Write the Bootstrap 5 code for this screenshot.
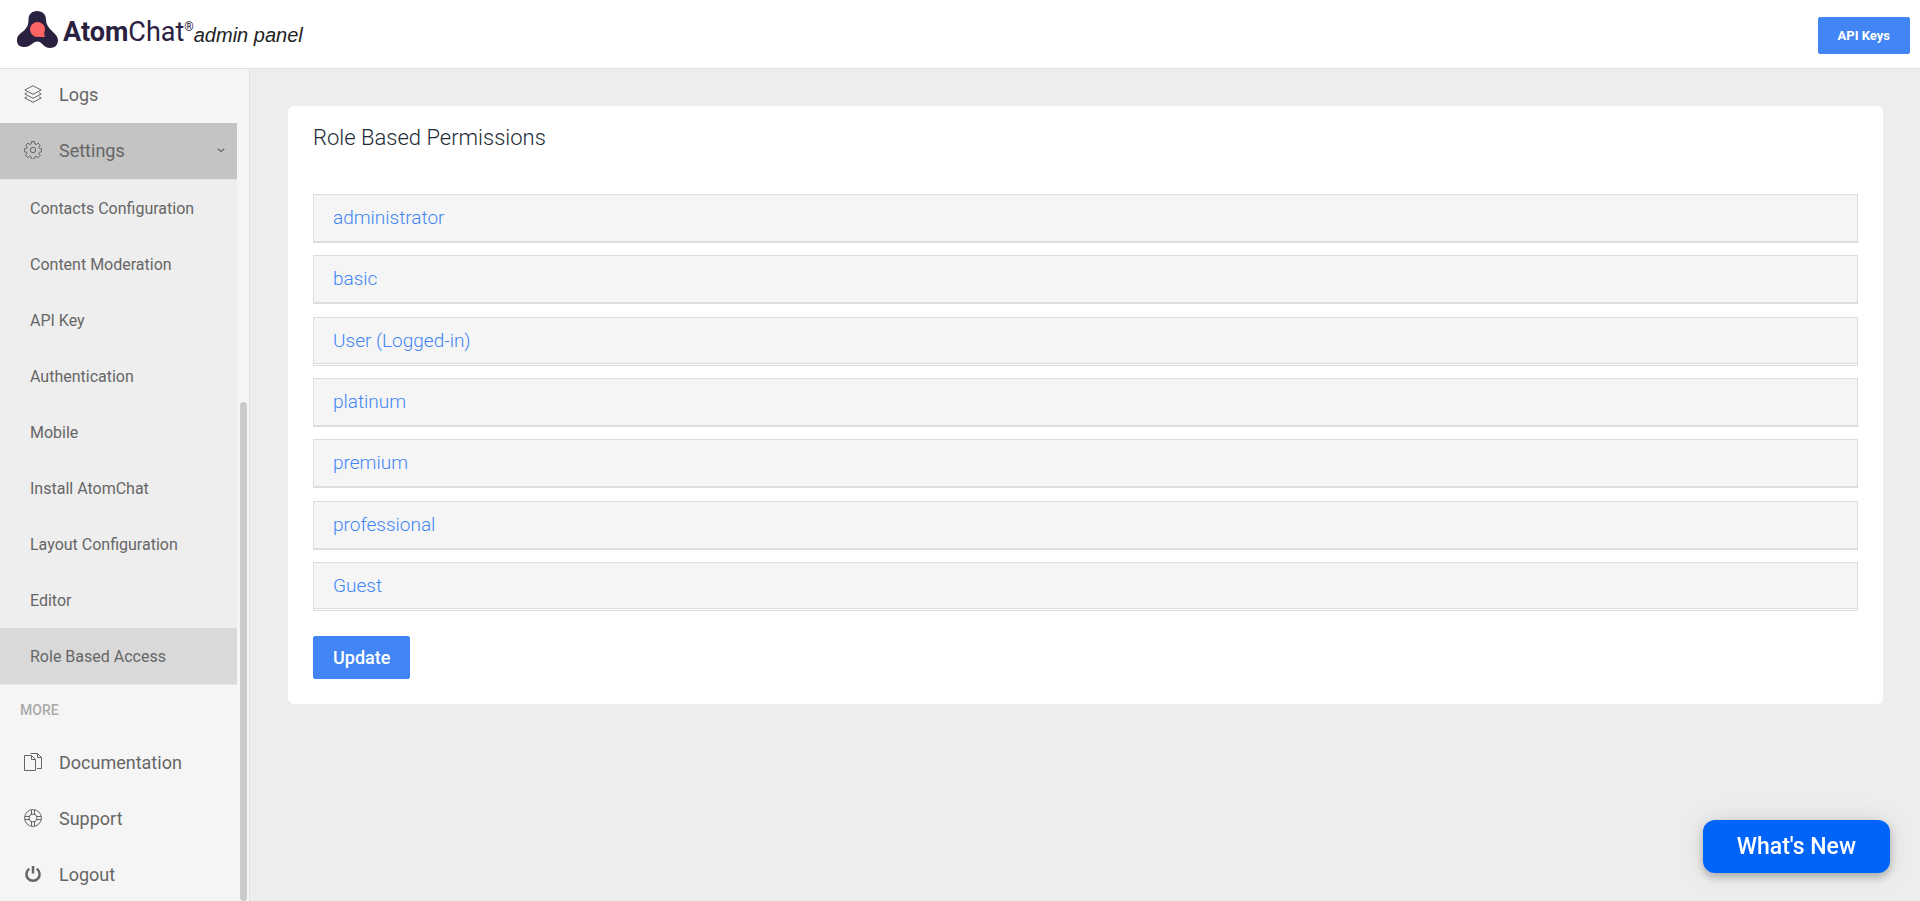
<!DOCTYPE html>
<html lang="en">
<head>
<meta charset="utf-8">
<meta name="viewport" content="width=device-width, initial-scale=1">
<title>AtomChat admin panel</title>
<link href="https://cdn.jsdelivr.net/npm/bootstrap@5.3.0/dist/css/bootstrap.min.css" rel="stylesheet">
<style>
  body { font-family: Roboto, "Liberation Sans", sans-serif; background: #ededed; color: #55595c; }
  .topbar { height: 69px; border-bottom: 1px solid #dfdfdf; background: #fff; padding: 2px 10px 0 16px; }
  .brand-link { margin-bottom: 8px; }
  .brand-word { font-size: 27px; line-height: 32px; color: #2a2140; padding-top: 5px; }
  .brand-word b { font-weight: 700; }
  .brand-word sup { font-size: 12px; top: -10px; vertical-align: baseline; line-height: 0; }
  .brand-sub { font: italic 20px/32px "Liberation Sans", sans-serif; color: #222; padding-top: 8px; }
  .btn-main { --bs-btn-color: #fff; --bs-btn-bg: #4285f4; --bs-btn-border-color: #4285f4; --bs-btn-hover-color: #fff; --bs-btn-hover-bg: #3275e4; --bs-btn-hover-border-color: #3275e4; --bs-btn-border-radius: 2px; }
  .btn-keys { font-size: 13px; line-height: 17px; font-weight: 700; padding: 9px 19px; }
  .btn-update { font-size: 18px; line-height: 27px; font-weight: 500; padding: 7px 19px; }
  .sidebar { width: 250px; border-right: 1px solid #dfdfdf; background: #f5f5f5; }
  .side-menu { min-width: 0; margin-top: -2px; }
  .side-link { display: flex; align-items: center; height: 56px; color: #666; text-decoration: none; font-size: 18px; padding: 0 10px 2px 24px; }
  .side-link svg { width: 18px; height: 18px; margin-right: 17px; flex: none; }
  .side-link.open { background: #c4c4c4; }
  .side-link .caret { width: 8px; height: 8px; margin: 0 2px 0 auto; }
  .side-sub { background: #eee; border-top: 1px solid #e5e5e5; border-bottom: 1px solid #e5e5e5; }
  .side-sub a { display: flex; align-items: center; height: 56px; padding: 2px 0 0 30px; font-size: 16px; color: #666; text-decoration: none; }
  .side-sub a.current { background: #d9d9d9; }
  .side-label { height: 50px; line-height: 50px; padding-left: 20px; font-size: 14px; font-weight: 500; color: #aaa; }
  .side-scroll { width: 12px; padding: 0 2px 0 3px; }
  .side-thumb { height: 60%; border-radius: 4px; background: #cacaca; }
  .permissions { margin: 37px 37px 37px 38px; padding: 16px 25px 25px; border-radius: 6px; background: #fff; }
  .permissions h1 { font-size: 22px; line-height: 32px; font-weight: 300; color: #212b36; margin-bottom: 40px; }
  .roles { min-height: 417px; margin-bottom: 25px; }
  .role { height: 49px; border: 1px solid #ddd; background: #fff; }
  .role a { display: block; height: 47px; line-height: 46px; padding-left: 19px; border-bottom: 1px solid #ddd; background: #f5f5f5; font-size: 19px; font-weight: 300; color: #4285f4; text-decoration: none; }
  .role.split a { height: 46px; }
  .whats-new { position: fixed; right: 30px; bottom: 28px; border: 0; border-radius: 12px; background: #0064fa; color: #fff; font-size: 23px; line-height: 29px; font-weight: 500; padding: 12px 34px; box-shadow: 0 4px 8px rgba(0,0,0,.25), 0 0 24px rgba(0,0,0,.1); }
</style>
</head>
<body class="d-flex flex-column vh-100 overflow-hidden">
<header class="topbar d-flex align-items-center justify-content-between flex-shrink-0">
  <a href="#" class="brand-link d-flex align-items-start text-decoration-none">
    <svg width="43" height="38" viewBox="0 0 43 38" aria-hidden="true">
      <path d="M21 0c-5.200 0-8.500 3.500-8.500 8.500 0 4.500-1 8-5 11.500C4 23 1 24.500 1 29.500 1 34 4 36 8.500 36c6 0 8.500-5.500 13-5.500S27.500 37 34 37c4.800 0 8-3 8-7.500 0-4.500-3.500-7-6-9.500-4-4-6-7-6-11.500C30 3.500 26.500 0 21 0z" fill="#2a2140"/>
      <circle cx="21.500" cy="18.500" r="7.500" fill="#ff6464"/>
      <path d="M28 21l.8 5-6 0z" fill="#ff6464"/>
    </svg>
    <span class="brand-word ms-1"><b>Atom</b>Chat<sup>®</sup></span><span class="brand-sub">admin panel</span>
  </a>
  <button type="button" class="btn btn-main btn-keys">API Keys</button>
</header>
<div class="d-flex flex-grow-1 overflow-hidden">
  <aside class="sidebar d-flex flex-shrink-0 overflow-hidden">
    <nav class="side-menu flex-grow-1">
      <a href="#" class="side-link"><svg viewBox="0 0 18 18" fill="none" stroke="#666"><path d="M9 .8L17.200 5 9 9.300.8 5z"/><path d="M3 7.800L.8 9 9 13.300 17.200 9 15 7.800"/><path d="M3 11.800L.8 13 9 17.300 17.200 13 15 11.800"/></svg>Logs</a>
      <a href="#" class="side-link open"><svg viewBox="0 0 18 18" fill="none" stroke="#666"><path d="M7.500.6h3l.4 2.300 1.400.6 1.900-1.400 2.100 2.100-1.400 1.900.6 1.400 2.100.4v3l-2.200.4-.6 1.400 1.400 1.900-2.100 2.100-1.900-1.400-1.400.6-.4 2.100h-3l-.4-2.200-1.400-.6-1.900 1.400-2.100-2.100L3 12.600l-.6-1.400-2-.3v-3l2.200-.4.6-1.400-1.400-1.900 2.100-2.100 1.900 1.400 1.300-.6z" stroke-linejoin="round"/><circle cx="9" cy="9" r="2.700"/></svg>Settings<svg class="caret" viewBox="0 0 8 8" fill="none" stroke="#666" stroke-width="1.300"><path d="M.7 2.800L4 5.400l3.300-2.600"/></svg></a>
      <div class="side-sub">
        <a href="#">Contacts Configuration</a>
        <a href="#">Content Moderation</a>
        <a href="#">API Key</a>
        <a href="#">Authentication</a>
        <a href="#">Mobile</a>
        <a href="#">Install AtomChat</a>
        <a href="#">Layout Configuration</a>
        <a href="#">Editor</a>
        <a href="#" class="current">Role Based Access</a>
      </div>
      <div class="side-label">MORE</div>
      <a href="#" class="side-link"><svg viewBox="0 0 18 18" fill="none" stroke="#666"><path d="M.5 2.500h7l4 4v11H.5zM7.500 2.500v4h4M6.500.5h7l4 4v11h-4.500M13.500.5v4h4"/></svg>Documentation</a>
      <a href="#" class="side-link"><svg viewBox="0 0 18 18" fill="none" stroke="#666"><circle cx="9" cy="9" r="8.400"/><circle cx="9" cy="9" r="4"/><path d="M7.500.8v4.500M10.500.8v4.500M7.500 12.700v4.500M10.500 12.700v4.500M.8 7.500h4.500M.8 10.500h4.500M12.700 7.500h4.500M12.700 10.500h4.500"/></svg>Support</a>
      <a href="#" class="side-link"><svg viewBox="0 0 18 18" fill="none" stroke="#666" stroke-width="2.500"><path d="M9 1v7.500M5.300 3.800a6.600 6.600 0 1 0 7.400 0"/></svg>Logout</a>
    </nav>
    <div class="side-scroll d-flex flex-column justify-content-end"><div class="side-thumb"></div></div>
  </aside>
  <main class="flex-grow-1 overflow-hidden">
    <section class="permissions">
      <h1>Role Based Permissions</h1>
      <div class="roles d-flex flex-column justify-content-between">
        <div class="role"><a href="#">administrator</a></div>
        <div class="role"><a href="#">basic</a></div>
        <div class="role split"><a href="#">User (Logged-in)</a></div>
        <div class="role"><a href="#">platinum</a></div>
        <div class="role"><a href="#">premium</a></div>
        <div class="role"><a href="#">professional</a></div>
        <div class="role split"><a href="#">Guest</a></div>
      </div>
      <button type="submit" class="btn btn-main btn-update">Update</button>
    </section>
  </main>
</div>
<button type="button" class="whats-new">What's New</button>
<script src="https://cdn.jsdelivr.net/npm/bootstrap@5.3.0/dist/js/bootstrap.bundle.min.js"></script>
</body>
</html>
